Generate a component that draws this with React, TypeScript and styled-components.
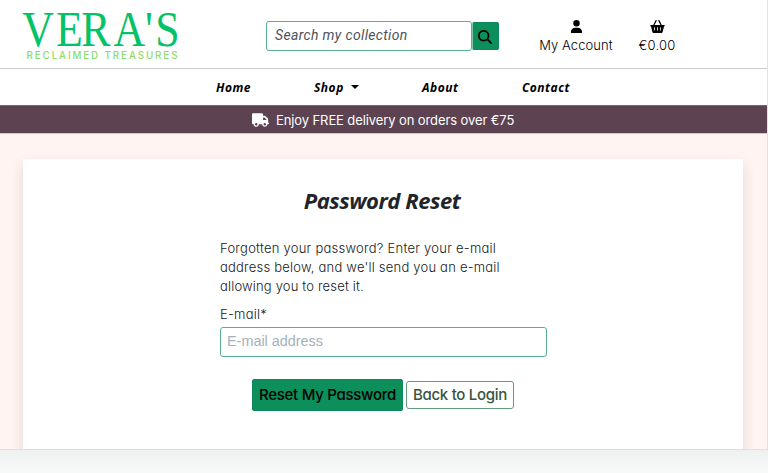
import React from "react";
import styled, { createGlobalStyle } from "styled-components";
import { FaUser, FaBasketShopping, FaTruck, FaMagnifyingGlass } from "react-icons/fa6";

const GlobalStyle = createGlobalStyle`
  *, *::before, *::after { box-sizing: border-box; }
  body { margin: 0; background: #f7f9f9; }
  button, input { font: inherit; }
`;

const geometric = `Inter, "Open Sans", sans-serif`;
const humanist = `"Open Sans", "Noto Sans", sans-serif`;

const Page = styled.div`
  height: 473px;
  overflow: hidden;
  background: linear-gradient(#eff1f0 450px, #f7f9f9 470px);
  font-family: ${geometric};
  font-feature-settings: "cv11";
  font-weight: 350;
  color: #16191c;
`;

const Frame = styled.div`
  display: flex;
  flex-direction: column;
  height: 450px;
  overflow: hidden;
  background: #fff4f2;
  border-right: 1px solid #e2e2e4;
  border-bottom: 1px solid #dedfe0;
`;

const Header = styled.header`
  display: flex;
  align-items: flex-start;
  flex: none;
  height: 69px;
  background: #fff;
  border-bottom: 1px solid #cbcbcd;
`;

const Logo = styled.svg`
  display: block;
  flex: none;
  width: 190px;
  height: 68px;
`;

const Search = styled.form`
  display: flex;
  align-items: center;
  margin: 21px 0 0 76px;
`;

const SearchInput = styled.input`
  width: 206px;
  height: 30px;
  padding: 0 8px 3px;
  border: 1px solid #57b18f;
  border-radius: 3px;
  outline: 0;
  font: italic 400 14px Roboto, sans-serif;
  letter-spacing: 0.35px;
  &::placeholder { color: #4d5358; opacity: 1; }
`;

const SearchButton = styled.button`
  display: grid;
  place-items: center;
  width: 27px;
  height: 28px;
  padding: 1px 1px 0 0;
  border: 1px solid #0d8a5b;
  border-left-color: #7fc4a9;
  border-radius: 2px;
  background: #0d8f5b;
  color: #000;
  font-size: 14px;
`;

const IconLink = styled.a<{ $width: number; $gap: number; $spacing: number }>`
  display: flex;
  flex-direction: column;
  align-items: center;
  width: ${(p) => p.$width}px;
  margin: 20px 0 0 ${(p) => p.$gap}px;
  color: #000;
  font-size: 13px;
  line-height: 18px;
  letter-spacing: ${(p) => p.$spacing}px;
  white-space: nowrap;
  svg { width: 15px; height: 13px; margin-bottom: 3px; }
`;

const Nav = styled.nav`
  display: flex;
  flex: none;
  height: 36px;
  padding-left: 216px;
  background: #fff;
`;

const NavItem = styled.a<{ $width: number }>`
  display: flex;
  align-items: center;
  width: ${(p) => p.$width}px;
  color: #000;
  font: italic 700 12px ${humanist};
  letter-spacing: 0.5px;
`;

const Caret = styled.i`
  margin: -1px 0 0 7px;
  border: 4px solid transparent;
  border-top-color: #000;
  border-bottom: 0;
`;

const Banner = styled.div`
  display: flex;
  align-items: center;
  flex: none;
  height: 29px;
  padding-left: 252px;
  border-top: 1px solid #766873;
  border-bottom: 1px solid #d4c1cd;
  background: #5d4351;
  color: #fff;
  font-size: 13px;
  font-weight: 400;
  letter-spacing: -0.1px;
  svg { width: 17px; height: 14px; margin-right: 7px; }
`;

const Card = styled.main`
  flex: none;
  width: 720px;
  height: 330px;
  margin: 25px 0 0 23px;
  padding-top: 24px;
  background: #fff;
  box-shadow: 0 6px 12px rgba(80, 50, 50, 0.14);
`;

const Title = styled.h1`
  margin: 0;
  padding-right: 2px;
  text-align: center;
  color: #212529;
  font: italic 700 22px/34px ${humanist};
  letter-spacing: -0.45px;
`;

const Form = styled.form`
  display: flex;
  flex-direction: column;
  width: 327px;
  margin: 22px 0 0 197px;
`;

const Copy = styled.p<{ $spacing: number }>`
  margin: 0;
  font-size: 13px;
  line-height: 19px;
  letter-spacing: ${(p) => p.$spacing}px;
  white-space: nowrap;
`;

const Label = styled.label`
  margin: 9px 0 4px;
  font-size: 13px;
  line-height: 18px;
  letter-spacing: 0.25px;
`;

const EmailInput = styled.input`
  height: 30px;
  padding: 0 6px 2px;
  border: 1px solid #57b18f;
  border-radius: 3px;
  outline: 0;
  font: 400 14.4px "Liberation Sans", sans-serif;
  &::placeholder { color: #a3b1bc; opacity: 1; }
`;

const Actions = styled.div`
  display: flex;
  align-items: center;
  gap: 3px;
  margin: 22px 0 0 32px;
`;

const Button = styled.button<{ $primary?: boolean }>`
  width: ${(p) => (p.$primary ? 151 : 108)}px;
  height: ${(p) => (p.$primary ? 32 : 28)}px;
  padding: 0 0 1px;
  border: 1px solid ${(p) => (p.$primary ? "#0d8a5b" : "#639a7d")};
  border-radius: ${(p) => (p.$primary ? 2 : 3)}px;
  background: ${(p) => (p.$primary ? "#0d8f5b" : "#fff")};
  color: ${(p) => (p.$primary ? "#000" : "#38543c")};
  font-family: ${geometric};
  font-feature-settings: "cv11";
  font-size: 15px;
  font-weight: 500;
  letter-spacing: -0.28px;
  white-space: nowrap;
`;

export default function App() {
  return (
    <>
      <GlobalStyle />
      <Page>
        <Frame>
          <Header>
            <Logo viewBox="0 0 190 68" role="img" aria-label="Vera's Reclaimed Treasures">
              <text
                transform="scale(0.86 1)"
                x="26 65 94.5 132 168.5 180.5"
                y="46"
                fill="#04c267"
                fontFamily="Liberation Serif, serif"
                fontSize="51"
              >
                VERA'S
              </text>
              <text x="26.5" y="59.3" fill="#8cdd68" fontFamily="Inter, sans-serif" fontSize="9.8" fontWeight="500" textLength="151">
                RECLAIMED TREASURES
              </text>
            </Logo>
            <Search>
              <SearchInput placeholder="Search my collection" />
              <SearchButton type="button" aria-label="Search"><FaMagnifyingGlass /></SearchButton>
            </Search>
            <IconLink $width={74} $gap={40} $spacing={0.08}><FaUser /><span>My Account</span></IconLink>
            <IconLink $width={38} $gap={25} $spacing={0.2}><FaBasketShopping /><span>€0.00</span></IconLink>
          </Header>
          <Nav>
            <NavItem $width={98}>Home</NavItem>
            <NavItem $width={108}>Shop <Caret /></NavItem>
            <NavItem $width={100}>About</NavItem>
            <NavItem $width={60}>Contact</NavItem>
          </Nav>
          <Banner><FaTruck />Enjoy FREE delivery on orders over €75</Banner>
          <Card>
            <Title>Password Reset</Title>
            <Form>
              <Copy $spacing={0.25}>Forgotten your password? Enter your e-mail</Copy>
              <Copy $spacing={0.21}>address below, and we'll send you an e-mail</Copy>
              <Copy $spacing={0.17}>allowing you to reset it.</Copy>
              <Label htmlFor="email">E-mail*</Label>
              <EmailInput id="email" placeholder="E-mail address" />
              <Actions>
                <Button type="button" $primary>Reset My Password</Button>
                <Button type="button">Back to Login</Button>
              </Actions>
            </Form>
          </Card>
        </Frame>
      </Page>
    </>
  );
}
